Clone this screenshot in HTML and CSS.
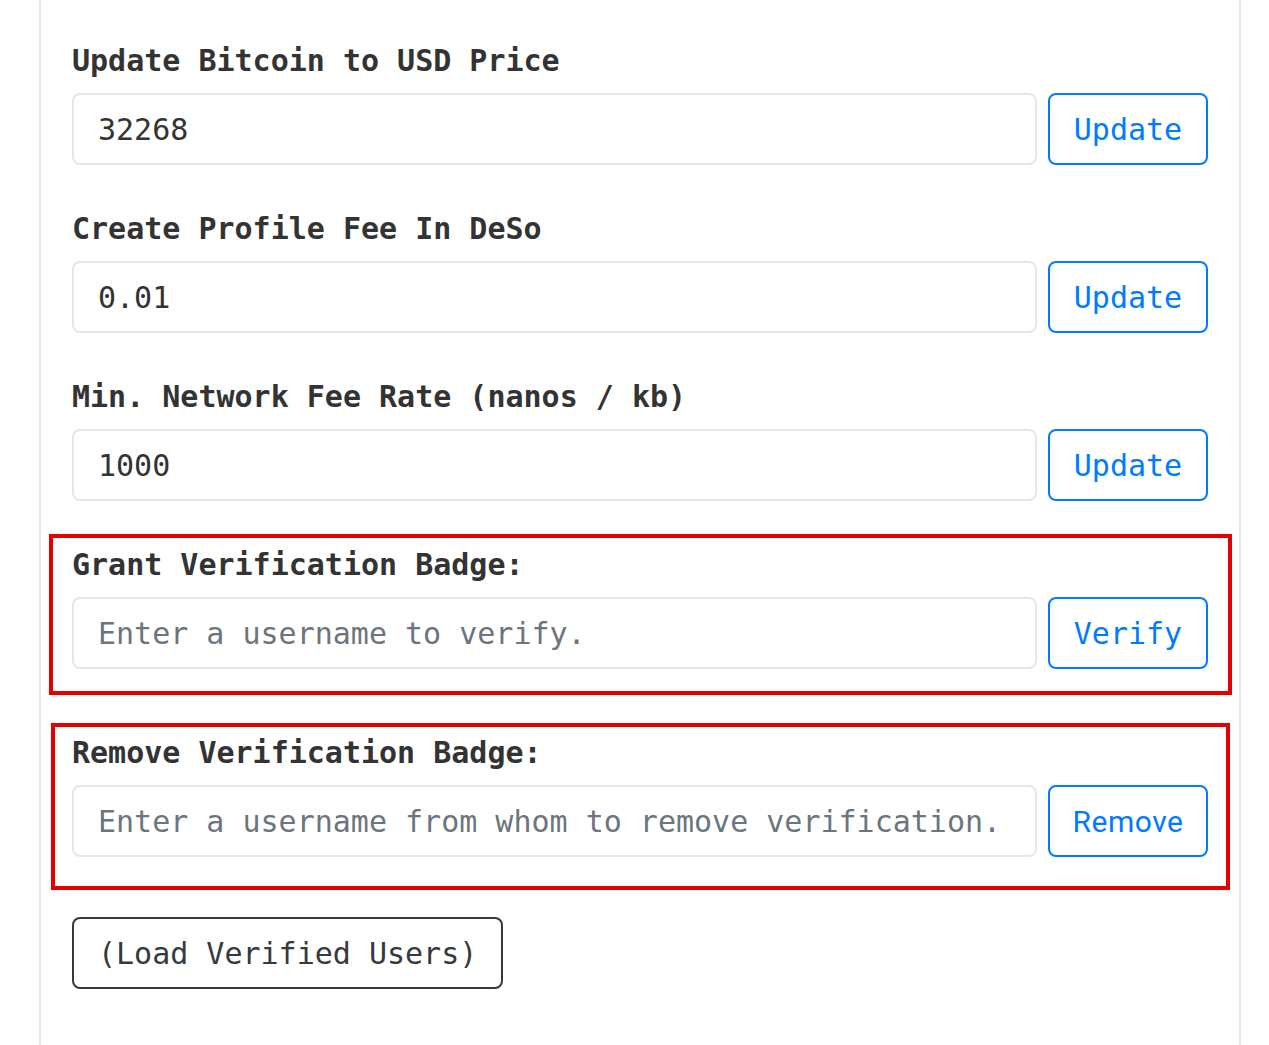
FILE: index.html
```html
<!DOCTYPE html>
<html lang="en">
<head>
<meta charset="utf-8">
<title>Admin fees</title>
<link rel="stylesheet" href="styles.css">
</head>
<body>
<div class="panel">
  <div class="field">
    <label class="field-label">Update Bitcoin to USD Price</label>
    <div class="field-row">
      <input class="field-input" type="text" value="32268">
      <button class="btn-outline">Update</button>
    </div>
  </div>
  <div class="field">
    <label class="field-label">Create Profile Fee In DeSo</label>
    <div class="field-row">
      <input class="field-input" type="text" value="0.01">
      <button class="btn-outline">Update</button>
    </div>
  </div>
  <div class="field">
    <label class="field-label">Min. Network Fee Rate (nanos / kb)</label>
    <div class="field-row">
      <input class="field-input" type="text" value="1000">
      <button class="btn-outline">Update</button>
    </div>
  </div>
  <div class="field field-grant annotated">
    <label class="field-label">Grant Verification Badge:</label>
    <div class="field-row">
      <input class="field-input" type="text" placeholder="Enter a username to verify.">
      <button class="btn-outline">Verify</button>
    </div>
  </div>
  <div class="field field-remove annotated">
    <label class="field-label">Remove Verification Badge:</label>
    <div class="field-row">
      <input class="field-input" type="text" placeholder="Enter a username from whom to remove verification.">
      <button class="btn-outline btn-sans">Remove</button>
    </div>
  </div>
  <button class="btn-dark">(Load Verified Users)</button>
</div>
</body>
</html>
```
FILE: styles.css
```css
html, body {
  margin: 0;
  padding: 0;
  background: #ffffff;
}

body {
  font-family: "DejaVu Sans Mono", "Liberation Mono", monospace;
  font-size: 30px;
  color: #333333;
}

.panel {
  box-sizing: border-box;
  width: 1202px;
  min-height: 1045px;
  margin-left: 39px;
  padding: 38px 31px 40px 31px;
  border-left: 2px solid #e6e6e6;
  border-right: 2px solid #e6e6e6;
}

.field {
  margin-bottom: 41px;
}

.field-grant {
  margin-bottom: 61px;
}

.field-remove {
  margin-bottom: 60px;
}

.annotated {
  position: relative;
}

.field-grant::after,
.field-remove::after {
  content: "";
  position: absolute;
  border: 4px solid #e60000;
  pointer-events: none;
}

.field-grant::after {
  left: -23px;
  top: -8px;
  right: -24px;
  bottom: -26px;
}

.field-remove::after {
  left: -21px;
  top: -7px;
  right: -22px;
  bottom: -33px;
}

.field-label {
  display: block;
  font-weight: bold;
  line-height: 45px;
  margin-bottom: 10px;
  color: #333333;
}

.field-row {
  display: flex;
  gap: 11px;
}

.field-input {
  flex: 1;
  box-sizing: border-box;
  height: 72px;
  padding: 0 24px;
  border: 2px solid #e6e6e6;
  border-radius: 8px;
  font-family: inherit;
  font-size: 30px;
  color: #333333;
  background: #ffffff;
  outline: none;
}

.field-input::placeholder {
  color: #6c757d;
  opacity: 1;
}

.btn-outline {
  box-sizing: border-box;
  width: 160px;
  height: 72px;
  padding: 0;
  border: 2px solid #007bff;
  border-radius: 8px;
  background: #ffffff;
  color: #007bff;
  font-family: inherit;
  font-size: 30px;
  cursor: pointer;
}

.btn-sans {
  font-family: Roboto, "Noto Sans", sans-serif;
  letter-spacing: 0.5px;
}

.btn-dark {
  display: block;
  box-sizing: border-box;
  height: 72px;
  padding: 0 24px;
  border: 2px solid #343a40;
  border-radius: 8px;
  background: #ffffff;
  color: #343a40;
  font-family: inherit;
  font-size: 30px;
  cursor: pointer;
}
```
